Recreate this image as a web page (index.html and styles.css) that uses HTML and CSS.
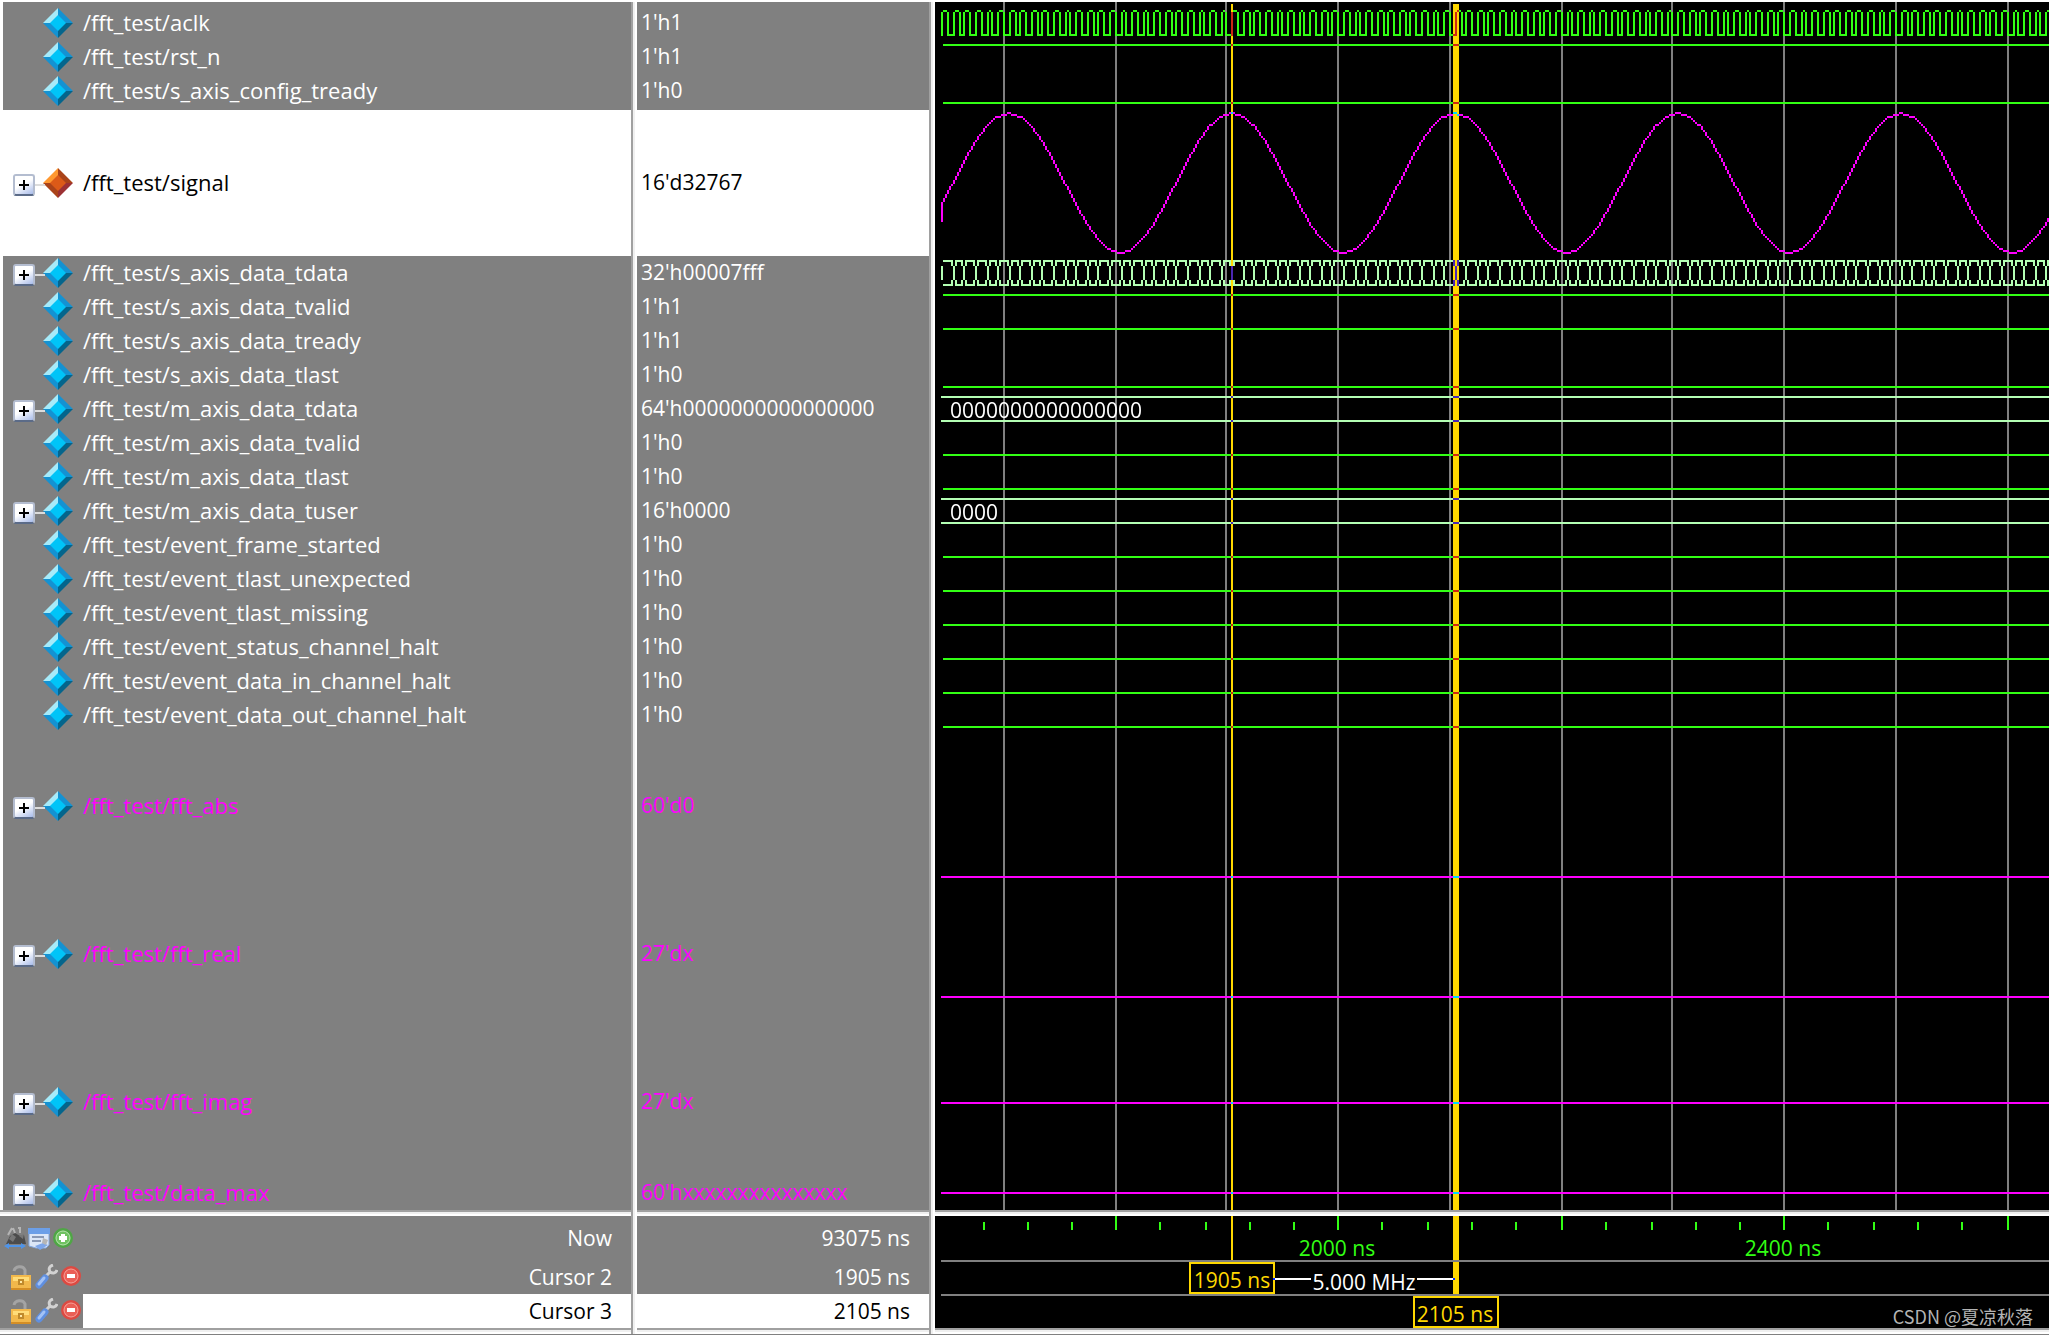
FILE: index.html
```html
<!DOCTYPE html>
<html lang="en">
<head>
<meta charset="utf-8">
<title>Wave - fft_test</title>
<link rel="stylesheet" href="styles.css">
</head>
<body>
<svg class="defs" aria-hidden="true">
  <symbol id="gem" viewBox="0 0 30 30">
    <path fill="#a6ebfa" d="M15 0V15H0Z"/>
    <path fill="#1492d2" d="M15 0 30 15H15ZM0 15H15V30Z"/>
    <path fill="#04658c" d="M30 15 15 30V15Z"/>
    <path fill="#00c4f8" d="M15 7 23 15 15 23 7 15Z"/>
  </symbol>
  <symbol id="gem-hot" viewBox="0 0 30 30">
    <path fill="#ff9830" d="M15 0V15H0Z"/>
    <path fill="#aa4319" d="M15 0 30 15H15ZM0 15H15V30Z"/>
    <path fill="#9c3134" d="M30 15 15 30V15Z"/>
    <path fill="#dc5a18" d="M15 7 23 15 15 23 7 15Z"/>
  </symbol>
  <symbol id="range" viewBox="0 0 24 26">
    <path fill="#4c4c4c" d="M3 19 7 11 12 8 17 11 21 10 23 19Z"/>
    <path fill="#777" d="M6 14 9 9 13 12 10 17ZM16 11 21 9 20 14Z"/>
    <path fill="none" stroke="#b4b4b4" stroke-width="2" d="M5 10 9 3M10 3 12 8M15 3H17V8"/>
    <path fill="none" stroke="#4f94e8" stroke-width="2" d="M3 21H21"/>
    <path fill="#4f94e8" d="M1 21 6 18V24ZM23 21 18 18V24Z"/>
  </symbol>
  <symbol id="note" viewBox="0 0 24 26">
    <path fill="#dbe6f7" stroke="#84a9e0" d="M1 4H21V20L18 23H8L1 21Z"/>
    <path fill="#6c9fe8" d="M0 3H22V9H0Z"/>
    <path fill="none" stroke="#8a99b5" stroke-width="2" d="M4 12H16M4 16H13"/>
    <path fill="#7da6ea" d="M7 21 15 18 20 20 12 25Z"/>
    <path fill="#b6b6b6" d="M15 13 20 15 18 20 14 18Z"/>
  </symbol>
  <symbol id="add" viewBox="0 0 24 26">
    <circle cx="10" cy="13" r="10" fill="#4fa645"/>
    <circle cx="10" cy="13" r="7" fill="#6fc261" stroke="#b9e4b0"/>
    <path fill="#fff" d="M8 9H12V11H14V15H12V17H8V15H6V11H8Z"/>
  </symbol>
  <symbol id="lock" viewBox="0 0 24 26">
    <path fill="none" stroke="#a4a4a4" stroke-width="3" d="M5 7C6 2 14 1 16 6V12"/>
    <path fill="#f2b84b" d="M2 11H22V25H2Z"/>
    <path fill="#ffdc79" d="M4 13H20V17H4Z"/>
    <path fill="#d48e25" d="M2 24H22V26H2Z"/>
    <path fill="#c08a2c" d="M9 15H15V21H9Z"/>
    <path fill="#ffe9a8" d="M11 17H13V19H11Z"/>
  </symbol>
  <symbol id="wrench" viewBox="0 0 24 26">
    <path fill="none" stroke="#d2d2d2" stroke-width="3" d="M11 13 16 8C14 4 16 2 19 1M16 8C19 10 22 9 23 6"/>
    <path fill="none" stroke="#5f8fe0" stroke-width="7" stroke-linecap="round" d="M5 21 11 14"/>
    <path fill="none" stroke="#a3c2f5" stroke-width="3" stroke-linecap="round" d="M5 20 10 14"/>
  </symbol>
  <symbol id="remove" viewBox="0 0 24 26">
    <circle cx="12" cy="12" r="10" fill="#dc4a42"/>
    <circle cx="12" cy="12" r="7" fill="#ea5f56" stroke="#f8a39b"/>
    <path fill="#fff" d="M8 10H16V14H8Z"/>
  </symbol>
</svg>

<main class="wave-window">
  <table class="signals">
    <colgroup><col class="col-name"><col class="col-value"></colgroup>
    <tbody>
      <tr class="top"><td><div class="name"><svg class="gem"><use href="#gem"/></svg><span>/fft_test/aclk</span></div></td><td class="value">1'h1</td></tr>
      <tr><td><div class="name"><svg class="gem"><use href="#gem"/></svg><span>/fft_test/rst_n</span></div></td><td class="value">1'h1</td></tr>
      <tr><td><div class="name"><svg class="gem"><use href="#gem"/></svg><span>/fft_test/s_axis_config_tready</span></div></td><td class="value">1'h0</td></tr>
      <tr class="gap"><td></td><td></td></tr>
      <tr class="analog selected"><td><div class="name"><button class="expand" aria-label="Expand signal"></button><svg class="gem"><use href="#gem-hot"/></svg><span>/fft_test/signal</span></div></td><td class="value">16'd32767</td></tr>
      <tr><td><div class="name"><button class="expand" aria-label="Expand s_axis_data_tdata"></button><svg class="gem"><use href="#gem"/></svg><span>/fft_test/s_axis_data_tdata</span></div></td><td class="value">32'h00007fff</td></tr>
      <tr><td><div class="name"><svg class="gem"><use href="#gem"/></svg><span>/fft_test/s_axis_data_tvalid</span></div></td><td class="value">1'h1</td></tr>
      <tr><td><div class="name"><svg class="gem"><use href="#gem"/></svg><span>/fft_test/s_axis_data_tready</span></div></td><td class="value">1'h1</td></tr>
      <tr><td><div class="name"><svg class="gem"><use href="#gem"/></svg><span>/fft_test/s_axis_data_tlast</span></div></td><td class="value">1'h0</td></tr>
      <tr><td><div class="name"><button class="expand" aria-label="Expand m_axis_data_tdata"></button><svg class="gem"><use href="#gem"/></svg><span>/fft_test/m_axis_data_tdata</span></div></td><td class="value">64'h0000000000000000</td></tr>
      <tr><td><div class="name"><svg class="gem"><use href="#gem"/></svg><span>/fft_test/m_axis_data_tvalid</span></div></td><td class="value">1'h0</td></tr>
      <tr><td><div class="name"><svg class="gem"><use href="#gem"/></svg><span>/fft_test/m_axis_data_tlast</span></div></td><td class="value">1'h0</td></tr>
      <tr><td><div class="name"><button class="expand" aria-label="Expand m_axis_data_tuser"></button><svg class="gem"><use href="#gem"/></svg><span>/fft_test/m_axis_data_tuser</span></div></td><td class="value">16'h0000</td></tr>
      <tr><td><div class="name"><svg class="gem"><use href="#gem"/></svg><span>/fft_test/event_frame_started</span></div></td><td class="value">1'h0</td></tr>
      <tr><td><div class="name"><svg class="gem"><use href="#gem"/></svg><span>/fft_test/event_tlast_unexpected</span></div></td><td class="value">1'h0</td></tr>
      <tr><td><div class="name"><svg class="gem"><use href="#gem"/></svg><span>/fft_test/event_tlast_missing</span></div></td><td class="value">1'h0</td></tr>
      <tr><td><div class="name"><svg class="gem"><use href="#gem"/></svg><span>/fft_test/event_status_channel_halt</span></div></td><td class="value">1'h0</td></tr>
      <tr><td><div class="name"><svg class="gem"><use href="#gem"/></svg><span>/fft_test/event_data_in_channel_halt</span></div></td><td class="value">1'h0</td></tr>
      <tr><td><div class="name"><svg class="gem"><use href="#gem"/></svg><span>/fft_test/event_data_out_channel_halt</span></div></td><td class="value">1'h0</td></tr>
      <tr class="analog tall"><td><div class="name"><button class="expand" aria-label="Expand fft_abs"></button><svg class="gem"><use href="#gem"/></svg><span>/fft_test/fft_abs</span></div></td><td class="value">60'd0</td></tr>
      <tr class="analog tall"><td><div class="name"><button class="expand" aria-label="Expand fft_real"></button><svg class="gem"><use href="#gem"/></svg><span>/fft_test/fft_real</span></div></td><td class="value">27'dx</td></tr>
      <tr class="analog tall"><td><div class="name"><button class="expand" aria-label="Expand fft_imag"></button><svg class="gem"><use href="#gem"/></svg><span>/fft_test/fft_imag</span></div></td><td class="value">27'dx</td></tr>
      <tr class="magenta"><td><div class="name"><button class="expand" aria-label="Expand data_max"></button><svg class="gem"><use href="#gem"/></svg><span>/fft_test/data_max</span></div></td><td class="value">60'hxxxxxxxxxxxxxxx</td></tr>
    </tbody>
    <tbody class="cursors">
      <tr class="split"><td></td><td></td></tr>
      <tr class="now"><td><div class="cursor"><div class="tools"><button aria-label="Time range"><svg><use href="#range"/></svg></button><button aria-label="Edit grid and timeline"><svg><use href="#note"/></svg></button><button aria-label="Add cursor"><svg><use href="#add"/></svg></button></div><span>Now</span></div></td><td class="time">93075 ns</td></tr>
      <tr><td><div class="cursor"><div class="tools row-tools"><button aria-label="Lock cursor 2"><svg><use href="#lock"/></svg></button><button aria-label="Edit cursor 2"><svg><use href="#wrench"/></svg></button><button aria-label="Remove cursor 2"><svg><use href="#remove"/></svg></button></div><span>Cursor 2</span></div></td><td class="time">1905 ns</td></tr>
      <tr class="selected"><td><div class="cursor"><div class="tools row-tools"><button aria-label="Lock cursor 3"><svg><use href="#lock"/></svg></button><button aria-label="Edit cursor 3"><svg><use href="#wrench"/></svg></button><button aria-label="Remove cursor 3"><svg><use href="#remove"/></svg></button></div><span>Cursor 3</span></div></td><td class="time">2105 ns</td></tr>
      <tr class="split"><td></td><td></td></tr>
    </tbody>
  </table>

  <section class="traces">
    <svg class="plot" id="plot" role="img" aria-label="Waveforms"></svg>
    <div class="split-bar"></div>
    <svg class="axis" id="axis" role="img" aria-label="Timeline"></svg>
    <div class="split-bar"></div>
    <span class="credit">CSDN @夏凉秋落</span>
  </section>
</main>
<footer class="edge"></footer>
<script src="waves.js"></script>
</body>
</html>
```
FILE: styles.css
```css
* { box-sizing: border-box; }

body {
  margin: 0;
  padding-top: 2px;
  background: #fff;
  color: #fff;
  font: 21px/28px "Open Sans", "Noto Sans", "Noto Sans CJK SC", sans-serif;
  overflow-x: hidden;
}

.defs { position: absolute; width: 0; height: 0; }

.wave-window {
  display: grid;
  grid-template-columns: 935px minmax(0, 1fr);
  align-items: start;
}

/* signal names and values */
.signals {
  width: 100%;
  table-layout: fixed;
  border-collapse: separate;
  border-spacing: 0;
}
.col-name { width: 637px; }

.signals td {
  height: 34px;
  padding: 0;
  vertical-align: middle;
  white-space: nowrap;
  background: linear-gradient(to right, #a0a0a0 2px, #f0f0f0 2px 4px, #fff 4px) right / 6px 100% no-repeat #808080;
}
.signals td:first-child { border-left: 3px solid #fff; }
.signals .cursors td:first-child { border-left: 0; }

.signals .top td { height: 38px; padding-top: 4px; }
.signals .gap td { height: 2px; }
.signals .analog td { height: 146px; }
.signals .tall td { height: 148px; }
.signals .selected td { background-color: #fff; color: #000; }
.signals .tall, .signals .magenta { color: #f0f; }

.name {
  display: flex;
  align-items: center;
  height: 30px;
  padding-left: 40px;
  font-size: 22px;
}
.name span { padding: 0 0 3px 10px; }
.name:has(.expand) { padding-left: 10px; }
.gem { width: 30px; height: 30px; flex: none; }

.expand {
  position: relative;
  width: 22px;
  height: 22px;
  margin: 4px 8px 0 0;
  padding: 0;
  border: 2px solid #b4bdd0;
  border-bottom-color: #5b6b88;
  border-radius: 3px;
  background: linear-gradient(150deg, #fff 45%, #a9bcea);
}
.expand::before {
  content: "";
  position: absolute;
  inset: 4px;
  background:
    linear-gradient(#000, #000) center / 10px 2px no-repeat,
    linear-gradient(#000, #000) center / 2px 10px no-repeat;
}
.expand::after {
  content: "";
  position: absolute;
  left: 20px;
  top: 8px;
  width: 10px;
  height: 2px;
  background: #dcdcdc;
}

.signals .value { padding: 0 0 2px 4px; }
.signals .top .value { padding-top: 4px; }

/* cursor pane */
.signals .split td {
  height: 6px;
  padding: 0;
  background:
    linear-gradient(to right, #a0a0a0 2px, #f0f0f0 2px 4px, #fff 4px) right / 6px 100% no-repeat,
    linear-gradient(#a0a0a0 2px, #f0f0f0 2px 4px, #fff 4px);
}
.signals .now td { height: 44px; }
.signals .time { padding-right: 25px; text-align: right; }

.cursor {
  display: flex;
  align-items: center;
  justify-content: space-between;
  padding-right: 25px;
}
.tools {
  display: flex;
  align-items: center;
  gap: 1px;
  width: 83px;
  height: 34px;
  padding-left: 3px;
  background: #808080;
}
.row-tools { padding-left: 9px; }
.tools button {
  width: 24px;
  height: 26px;
  padding: 0;
  border: 0;
  background: none;
}
.tools svg { display: block; width: 24px; height: 26px; }

/* waveforms */
.traces { position: relative; }
.plot, .axis { display: block; width: 100%; background: #000; isolation: isolate; }
.plot { height: 1208px; }
.axis { height: 112px; }
.plot, .axis { shape-rendering: crispEdges; }
.split-bar { height: 6px; background: linear-gradient(#a0a0a0 2px, #f0f0f0 2px 4px, #fff 4px); }

.grid { fill: #808080; }
.logic { fill: #32ff14; }
.bus { fill: #b4ffb4; }
.magenta-line { fill: #f0f; }
.white { fill: #fff; }
.marker { fill: #ffd800; }
.blend { mix-blend-mode: difference; }
.marker-box { fill: #000; stroke: #ffd800; stroke-width: 2; }
.joint { fill: #0028ff; }
.mid { text-anchor: middle; }

.credit {
  position: absolute;
  right: 16px;
  bottom: 6px;
  color: #b4b4b4;
  font: 18px/24px "Noto Sans CJK SC", sans-serif;
}

.edge { height: 1px; background: #808080; }
```
FILE: waves.js
```js
// All traces sit on a coarse grid of 2px cells; column 0 is the left edge of the plot.
const CELL = 2;
const LEFT = 6;
const PER_CLOCK = 5.575;
const columns = Math.ceil(document.getElementById('plot').clientWidth / CELL);
const x = (col) => LEFT + col * CELL;

const box = (cls, bx, by, w, h) => `<path class="${cls}" d="M${bx} ${by}h${w}v${h}h${-w}z"/>`;
const rect = (bx, by, w, h) => `M${bx} ${by}h${w}v${h}h${-w}z`;
const text = (cls, tx, ty, s) => `<text class="${cls}" x="${tx}" y="${ty}">${s}</text>`;
const full = columns * CELL;

let plot = '';

// vertical grid, one line every 100 ns
for (let i = 0; i < 40; i++) {
  plot += box('grid', x(Math.floor(31.3 + 55.75 * i)), 0, 2, 1208);
}

// clock and data bus
let clock = '';
let bus = rect(x(0), 264, 2, 14);
for (let k = 0; x(k * PER_CLOCK) < full + 20; k++) {
  const rise = Math.round(PER_CLOCK * k + 0.3);
  const fall = Math.round(PER_CLOCK * (k + 0.5) + 0.3);
  const next = Math.round(PER_CLOCK * (k + 1) + 0.3);
  clock += rect(x(rise), 10, 2, 24);
  clock += rect(x(rise + 1), 8, (fall - rise - 1) * 2, 2);
  clock += rect(x(fall), 10, 2, 24);
  clock += rect(x(fall), 32, (next - fall + 1) * 2, 2);
  const w = (next - rise - 1) * 2;
  bus += rect(x(rise + 1), 258, w, 2) + rect(x(rise + 1), 282, w, 2);
  bus += rect(x(next), 264, 2, 14);
  for (const col of [next - 1, next + 1]) {
    bus += rect(x(col), 258, 2, 6) + rect(x(col), 278, 2, 6);
  }
}
plot += `<path class="logic" d="${clock}"/><path class="bus" d="${bus}"/>`;

// flat one-bit signals
for (const y of [42, 100, 292, 326, 384, 452, 486, 554, 588, 622, 656, 690, 724]) {
  plot += box('logic', x(1), y, full, 2);
}
for (const y of [394, 418, 496, 520]) plot += box('bus', x(0), y, full, 2);
for (const y of [874, 994, 1100, 1190]) plot += box('magenta-line', x(0), y, full, 2);

// analog sine, 5 MHz, sampled every clock
const level = (col) => {
  const s = (col - 33.5) / PER_CLOCK;
  const a = Math.floor(s);
  const v = (n) => Math.cos((n * Math.PI) / 10);
  return 90.3 - 35 * (v(a) + (v(a + 1) - v(a)) * (s - a));
};
let sine = rect(x(0), 200, 2, 20);
for (let c = 1; c < columns; c++) {
  const a = Math.round(level(c - 0.5));
  const b = Math.round(level(c + 0.5));
  const top = Math.min(a, b);
  const rows = Math.max(1, Math.abs(a - b));
  sine += rect(x(c), top * 2, 2, rows * 2);
}
plot += `<path class="magenta-line" d="${sine}"/>`;

plot += text('white', 15, 416, '0000000000000000') + text('white', 15, 518, '0000');
plot += box('marker blend', 296, 2, 2, 1206) + box('marker blend', 518, 2, 6, 1206);
document.getElementById('plot').innerHTML = plot;

// timeline: major tick every 200 ns, minor every 40 ns
let axis = '';
const minor = [22, 45, 67, 89];
for (let i = -1; i < 20; i++) {
  const major = Math.trunc(87.2 + 111.5 * i);
  if (i >= 0) axis += box('logic', x(major), 0, 2, 14);
  for (const m of minor) if (major + m > 0) axis += box('logic', x(major + m), 6, 2, 8);
}
axis += box('marker', 296, 0, 2, 44) + box('marker', 518, 0, 6, 78);
axis += box('grid', x(0), 44, full, 2) + box('grid', x(0), 78, full, 2);
axis += text('logic mid', 402, 40, '2000 ns') + text('logic mid', 848, 40, '2400 ns');
axis += box('white', 340, 62, 36, 2) + box('white', 482, 62, 36, 2);
axis += '<rect class="marker-box" x="255" y="47" width="84" height="30"/>';
axis += '<rect class="marker-box" x="479" y="81" width="84" height="30"/>';
axis += box('joint', 338, 62, 2, 2) + box('joint', 518, 62, 2, 2);
axis += text('marker mid', 297, 72, '1905 ns') + text('marker mid', 520, 106, '2105 ns');
axis += text('white mid', 429, 74, '5.000 MHz');
document.getElementById('axis').innerHTML = axis;
```
